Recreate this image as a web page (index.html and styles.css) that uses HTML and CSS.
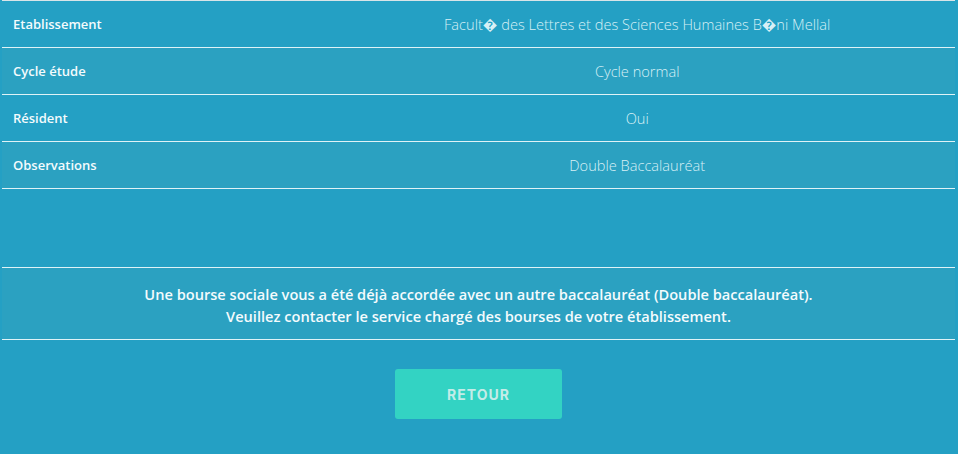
FILE: index.html
```html
<!DOCTYPE html>
<html lang="fr">
  <head>
    <meta charset="UTF-8" />
    <meta name="viewport" content="width=device-width, initial-scale=1.0" />
    <title>Bourse - Résultat</title>
    <link rel="stylesheet" href="styles.css">
  </head>
  <body>
    <div class="page">
      <table class="info">
        <tbody>
          <tr>
            <th>Etablissement</th>
            <td>Facult� des Lettres et des Sciences Humaines B�ni Mellal</td>
          </tr>
          <tr>
            <th>Cycle étude</th>
            <td>Cycle normal</td>
          </tr>
          <tr>
            <th>Résident</th>
            <td>Oui</td>
          </tr>
          <tr>
            <th>Observations</th>
            <td>Double Baccalauréat</td>
          </tr>
        </tbody>
      </table>

      <div class="message">
        <p>Une bourse sociale vous a été déjà accordée avec un autre baccalauréat (Double baccalauréat).</p>
        <p>Veuillez contacter le service chargé des bourses de votre établissement.</p>
      </div>

      <div class="actions">
        <button type="button" class="btn-retour">RETOUR</button>
      </div>
    </div>
  </body>
</html>
```

FILE: styles.css
```css
body {
  font-family: "Open Sans", Arial, sans-serif;
  color: #fff;
  background-color: #24a0c4;
  margin: 0;
  padding: 0;
}

.page {
  padding: 0 3px 0 2px;
}

.info {
  width: 100%;
  border-collapse: collapse;
  border-top: 1px solid #d9e4e8;
}

.info tr {
  height: 47px;
  border-bottom: 1px solid #dff3f7;
}

.info tr:nth-child(even) {
  background-color: #2ba1c1;
}

.info th {
  width: 33.3%;
  text-align: left;
  padding: 0 0 0 11px;
  font-size: 13px;
  font-weight: 600;
  color: #f4fbfd;
}

.info td {
  text-align: center;
  padding: 0;
  font-size: 14.6px;
  font-weight: 300;
  color: #d8f0f6;
}

.message {
  margin-top: 78px;
  background-color: #2ba1c1;
  border-top: 1px solid #dff3f7;
  border-bottom: 1px solid #dff3f7;
  padding: 15px 0 12px;
  text-align: center;
}

.message p {
  margin: 0;
  font-size: 14.6px;
  font-weight: 600;
  line-height: 22px;
  color: #f4fbfd;
}

.actions {
  display: flex;
  justify-content: center;
  padding-top: 29px;
}

.btn-retour {
  width: 167px;
  height: 50px;
  background-color: #33d3c3;
  color: #c4ece8;
  border: none;
  border-radius: 3px;
  font-family: Inter, "Open Sans", sans-serif;
  font-size: 14px;
  font-weight: 700;
  letter-spacing: 1px;
  cursor: pointer;
}
```
